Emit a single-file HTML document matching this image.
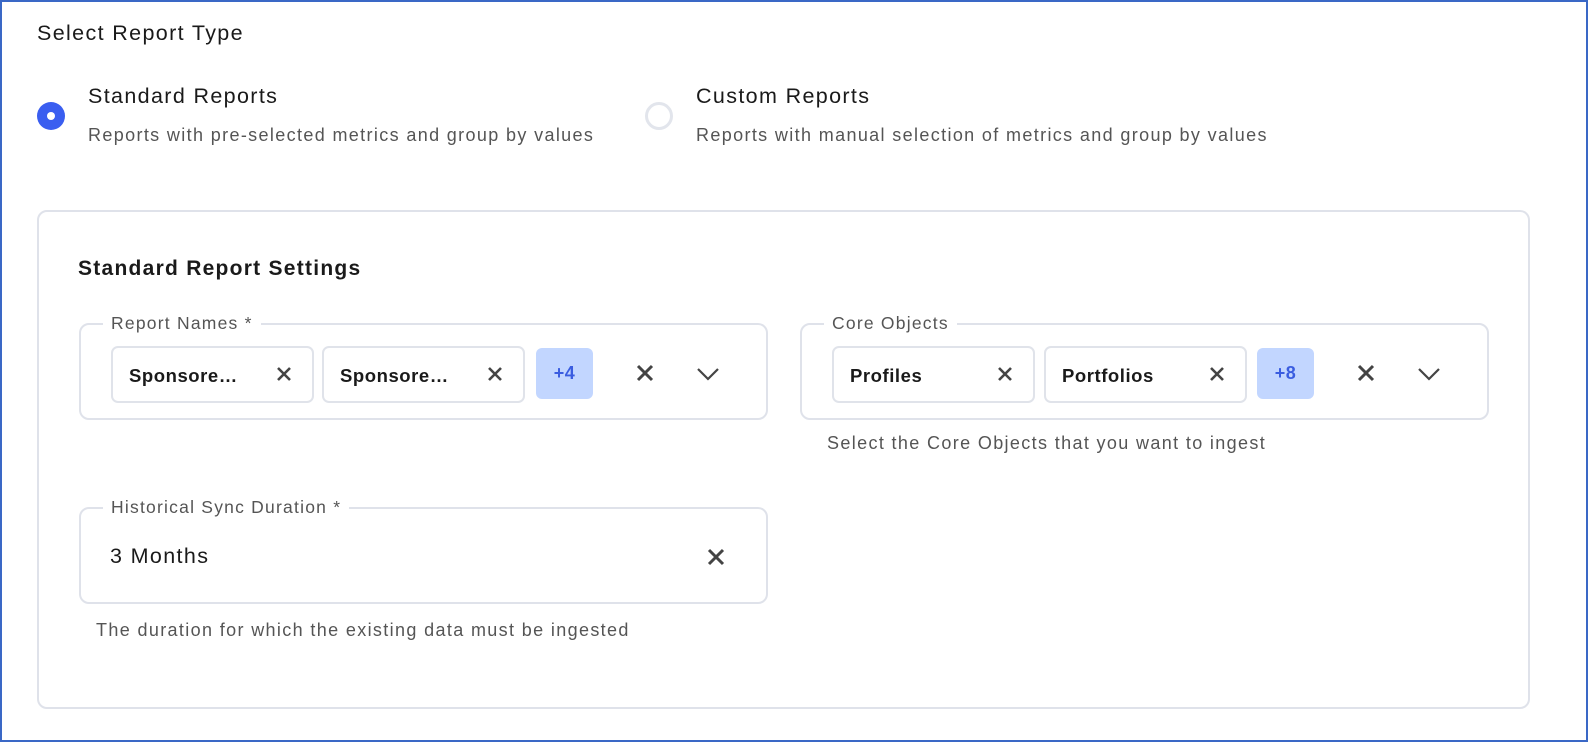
<!DOCTYPE html>
<html><head><style>
*{box-sizing:border-box;margin:0;padding:0}
body{width:1588px;height:742px;overflow:hidden;background:#fff;font-family:"Liberation Sans",sans-serif;color:#1a1a1a;position:relative;letter-spacing:0.085em}
.frame{position:absolute;left:0;top:0;width:1588px;height:742px;border:2px solid #3a68c6}
.a{position:absolute;white-space:nowrap}
.radio{position:absolute;width:28px;height:28px;border-radius:50%}
.field{position:absolute;border:2px solid #dfe2ea;border-radius:10px;height:97px}
.legend{position:absolute;top:-12px;background:#fff;padding:0 8px;font-size:17.5px;color:#555;left:22px;white-space:nowrap;letter-spacing:0.07em}
.chip{position:absolute;top:21px;height:57px;border:2px solid #e0e3ea;border-radius:7px;width:203px}
.chip span{position:absolute;left:16px;top:17px;font-size:18.5px;font-weight:bold;color:#1a1a1a;letter-spacing:0.03em}
.chip svg{position:absolute;right:20px;top:18px}
.plus{position:absolute;top:23px;height:51px;width:57px;background:#c2d6ff;border-radius:6px;color:#3a5de0;font-weight:bold;font-size:18px;text-align:center;line-height:51px;letter-spacing:0.03em}
.ic{position:absolute}
.help{position:absolute;font-size:18px;color:#555;white-space:nowrap}
</style></head><body>
<div class="frame"></div>
<div class="a" style="left:37px;top:21px;font-size:21.5px">Select Report Type</div>
<div class="radio" style="left:37px;top:102px;background:#3a5ef0"><div style="position:absolute;left:10px;top:10px;width:8px;height:8px;border-radius:50%;background:#fff"></div></div>
<div class="a" style="left:88px;top:84px;font-size:21.5px">Standard Reports</div>
<div class="a" style="left:88px;top:125px;font-size:18px;color:#555">Reports with pre-selected metrics and group by values</div>
<div class="radio" style="left:645px;top:102px;border:3px solid #e2e5ec"></div>
<div class="a" style="left:696px;top:84px;font-size:21.5px">Custom Reports</div>
<div class="a" style="left:696px;top:125px;font-size:18px;color:#555">Reports with manual selection of metrics and group by values</div>

<div style="position:absolute;left:37px;top:210px;width:1493px;height:499px;border:2px solid #dfe2ea;border-radius:10px">
<div class="a" style="left:39px;top:45px;font-size:21px;font-weight:bold;letter-spacing:0.06em">Standard Report Settings</div>

<div class="field" style="left:40px;top:111px;width:689px">
<div class="legend">Report Names *</div>
<div class="chip" style="left:30px"><span>Sponsore…</span><svg width="16" height="16" viewBox="0 0 16 16"><path d="M2 2L14 14M14 2L2 14" stroke="#444" stroke-width="2.6"/></svg></div>
<div class="chip" style="left:241px"><span>Sponsore…</span><svg width="16" height="16" viewBox="0 0 16 16"><path d="M2 2L14 14M14 2L2 14" stroke="#444" stroke-width="2.6"/></svg></div>
<div class="plus" style="left:455px">+4</div>
<svg class="ic" style="left:555px;top:39px" width="18" height="18" viewBox="0 0 18 18"><path d="M2 2L16 16M16 2L2 16" stroke="#444" stroke-width="3"/></svg>
<svg class="ic" style="left:615px;top:42px" width="24" height="14" viewBox="0 0 24 14"><path d="M2 2L12 12L22 2" stroke="#444" stroke-width="2.2" fill="none"/></svg>
</div>

<div class="field" style="left:761px;top:111px;width:689px">
<div class="legend">Core Objects</div>
<div class="chip" style="left:30px"><span>Profiles</span><svg width="16" height="16" viewBox="0 0 16 16"><path d="M2 2L14 14M14 2L2 14" stroke="#444" stroke-width="2.6"/></svg></div>
<div class="chip" style="left:242px"><span>Portfolios</span><svg width="16" height="16" viewBox="0 0 16 16"><path d="M2 2L14 14M14 2L2 14" stroke="#444" stroke-width="2.6"/></svg></div>
<div class="plus" style="left:455px">+8</div>
<svg class="ic" style="left:555px;top:39px" width="18" height="18" viewBox="0 0 18 18"><path d="M2 2L16 16M16 2L2 16" stroke="#444" stroke-width="3"/></svg>
<svg class="ic" style="left:615px;top:42px" width="24" height="14" viewBox="0 0 24 14"><path d="M2 2L12 12L22 2" stroke="#444" stroke-width="2.2" fill="none"/></svg>
</div>
<div class="help" style="left:788px;top:221px">Select the Core Objects that you want to ingest</div>

<div class="field" style="left:40px;top:295px;width:689px">
<div class="legend">Historical Sync Duration *</div>
<div class="a" style="left:29px;top:35px;font-size:21.5px">3 Months</div>
<svg class="ic" style="left:626px;top:39px" width="18" height="18" viewBox="0 0 18 18"><path d="M2 2L16 16M16 2L2 16" stroke="#444" stroke-width="3"/></svg>
</div>
<div class="help" style="left:57px;top:408px">The duration for which the existing data must be ingested</div>
</div>
</body></html>
